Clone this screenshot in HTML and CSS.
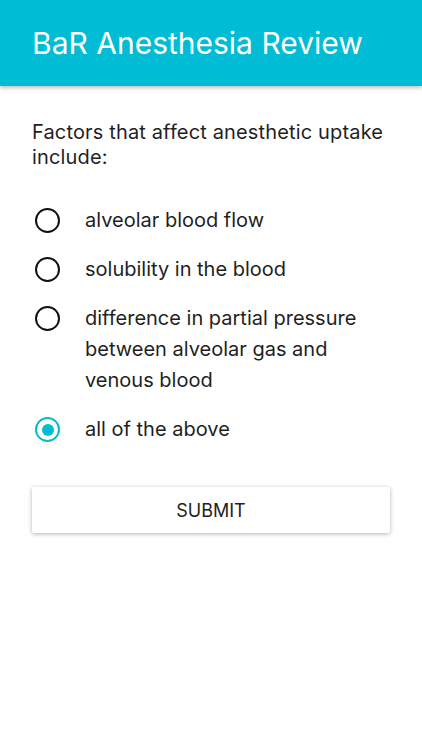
FILE: index.html
```html
<!DOCTYPE html>
<html>
<head>
<meta charset="utf-8">
<link rel="stylesheet" href="styles.css">
</head>
<body>
<header class="appbar"><h1 class="title">BaR Anesthesia Review</h1></header>
<main class="content">
  <p class="question">Factors that affect anesthetic uptake include:</p>
  <ul class="options">
    <li class="option"><span class="radio"></span><span class="label">alveolar blood flow</span></li>
    <li class="option"><span class="radio"></span><span class="label">solubility in the blood</span></li>
    <li class="option"><span class="radio"></span><span class="label">difference in partial pressure between alveolar gas and venous blood</span></li>
    <li class="option"><span class="radio checked"></span><span class="label">all of the above</span></li>
  </ul>
  <button class="submit">SUBMIT</button>
</main>
</body>
</html>
```
FILE: styles.css
```css
* { box-sizing: border-box; }
html, body { margin: 0; padding: 0; background: #fff; }
body { font-family: Inter, "Liberation Sans", sans-serif; color: #1f1f1f; width: 422px; height: 750px; overflow: hidden; }
.appbar {
  height: 86px;
  background: #00bcd4;
  display: flex;
  align-items: center;
  padding: 0 32px;
  box-shadow: 0 2px 4px rgba(0,0,0,0.25);
  position: relative;
}
.title { margin: 0; font-weight: 400; font-size: 30px; color: #fff; letter-spacing: 0; }
.content { padding: 34px 32px 0 32px; }
.question { margin: 0; font-size: 20px; line-height: 25px; width: 360px; letter-spacing: 0.15px; }
.options { list-style: none; margin: 35px 0 0 0; padding: 0; display: flex; flex-direction: column; gap: 18px; }
.option { display: flex; align-items: flex-start; }
.radio {
  width: 25px; height: 25px; border-radius: 50%;
  border: 2.5px solid #111;
  margin: 3px 25px 0 3px;
  flex: none;
  display: flex; align-items: center; justify-content: center;
}
.radio.checked { border-color: #00bcd4; }
.radio.checked::after { content: ""; width: 12px; height: 12px; border-radius: 50%; background: #00bcd4; }
.label { font-size: 20px; line-height: 31px; width: 290px; }
.submit {
  margin-top: 42px;
  width: 358px; height: 46px;
  background: #fff; border: none; border-radius: 2px;
  box-shadow: 0 1px 4px rgba(0,0,0,0.3);
  font-family: inherit; font-size: 18px; color: #222;
}
```
